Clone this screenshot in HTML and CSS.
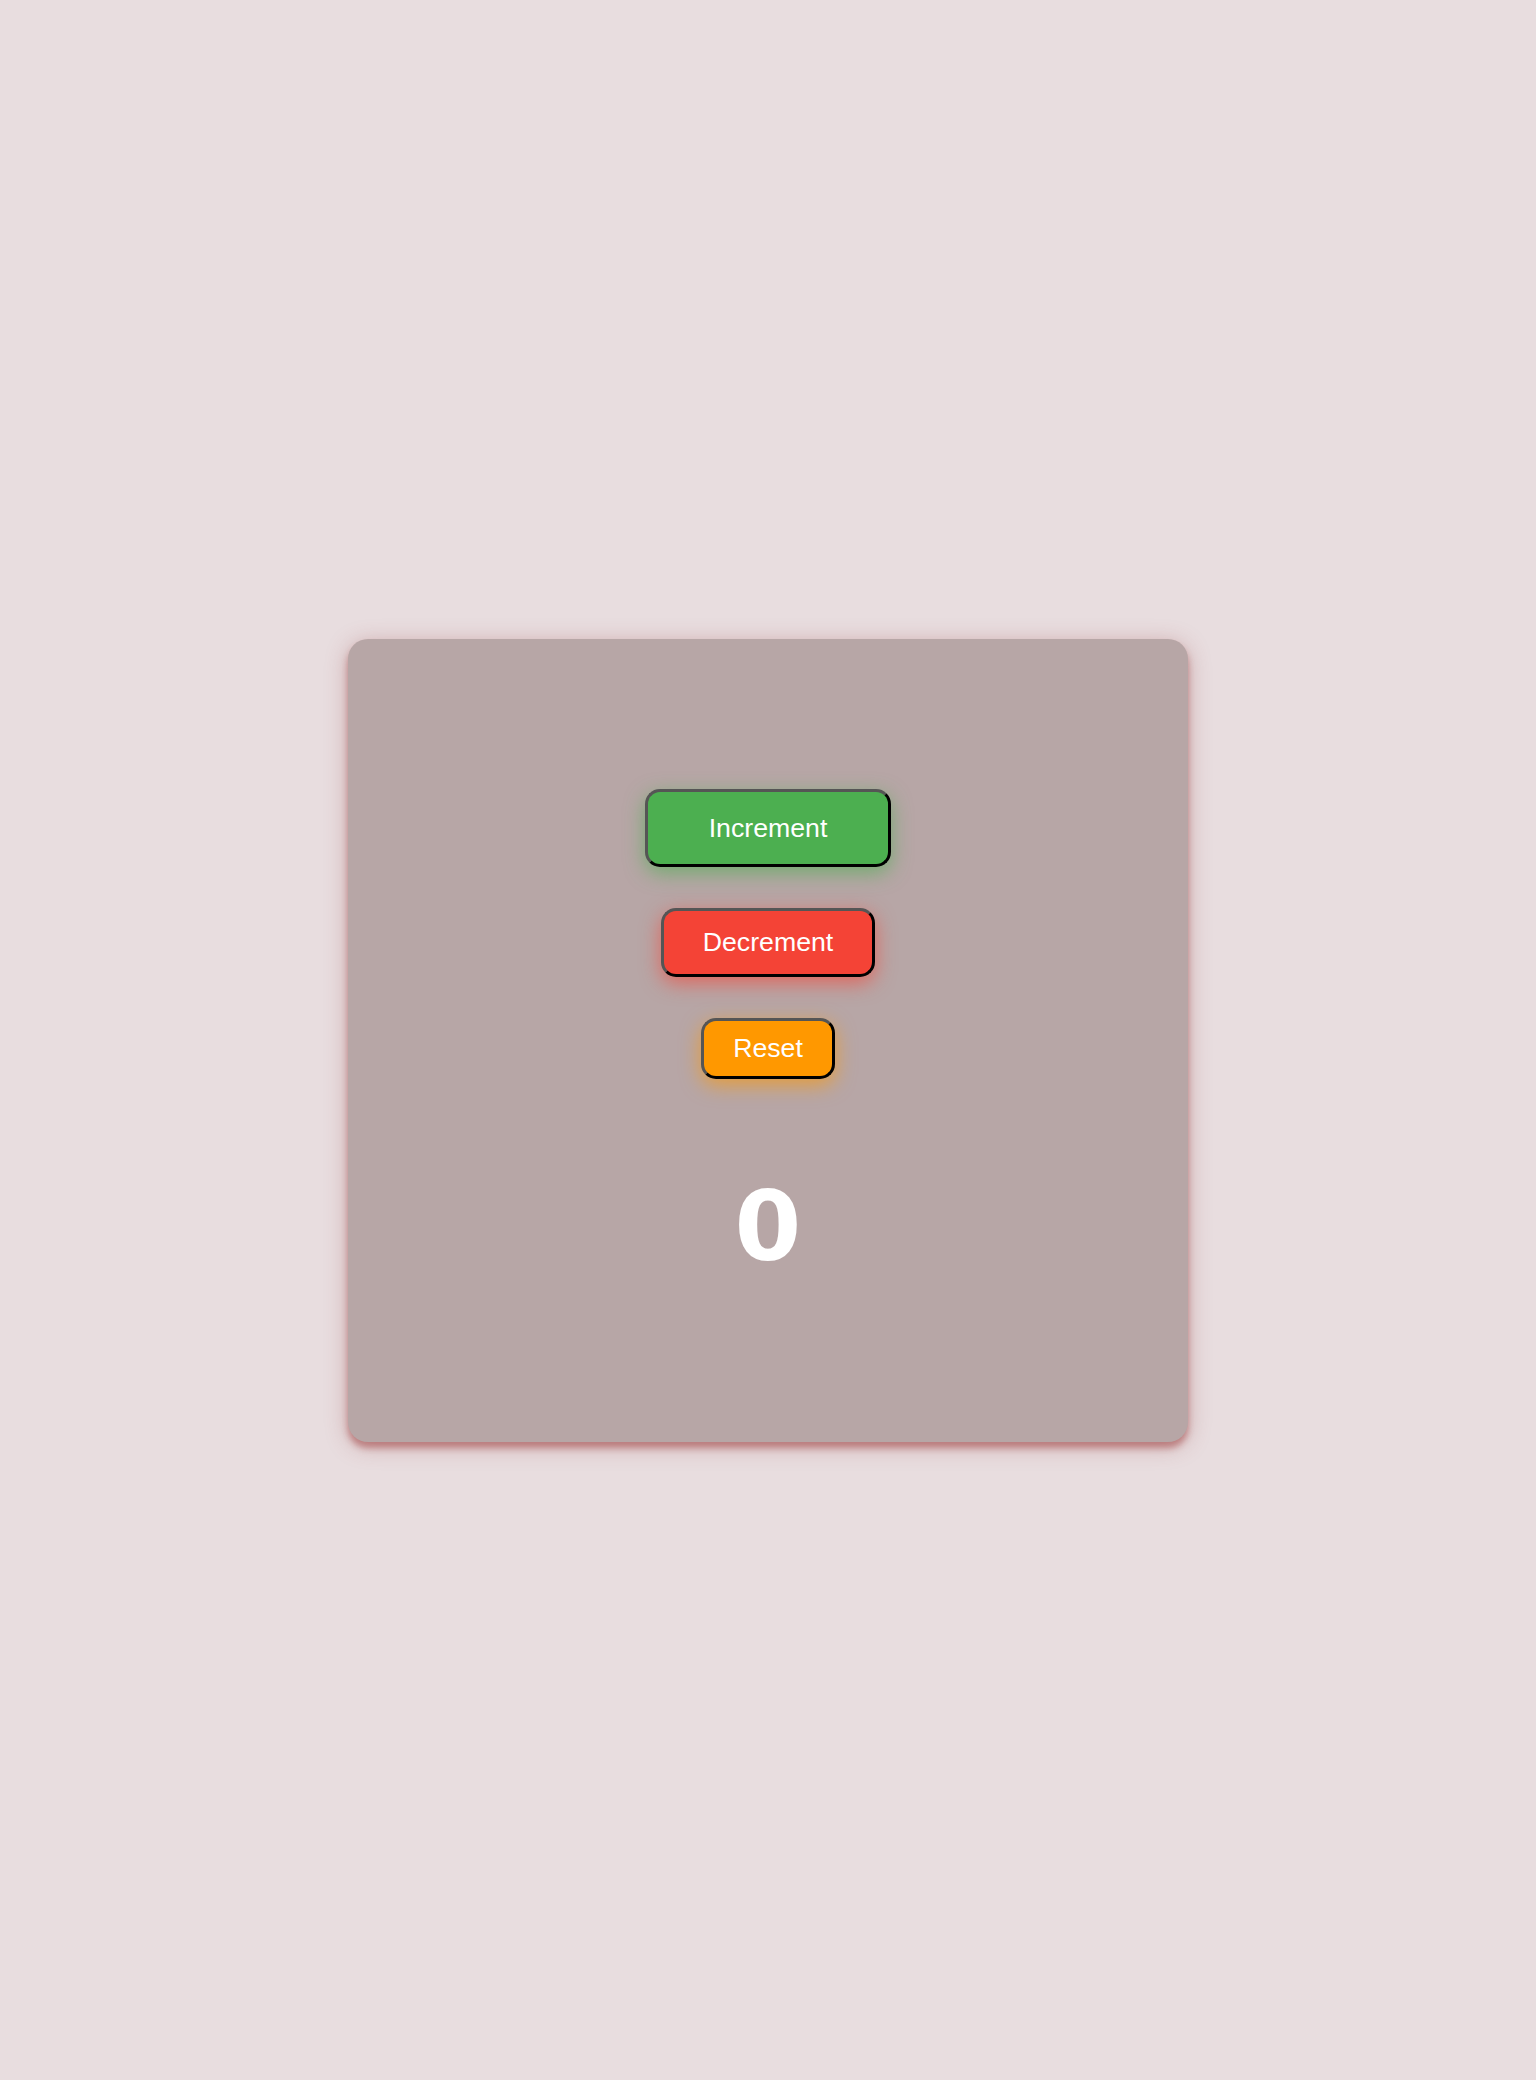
FILE: index.html
```html
<!DOCTYPE html>
<html lang="en">
<head>
<meta charset="utf-8">
<title>Counter</title>
<link rel="stylesheet" href="styles.css">
</head>
<body>
<main class="page">
  <section class="card">
    <button class="btn btn-inc" type="button">Increment</button>
    <button class="btn btn-dec" type="button">Decrement</button>
    <button class="btn btn-reset" type="button">Reset</button>
    <div class="count">0</div>
  </section>
</main>
</body>
</html>
```

FILE: styles.css
```css
html, body {
  margin: 0;
  padding: 0;
}
body {
  background: #e8dddf;
  font-family: "Liberation Sans", Arial, sans-serif;
}
.page {
  min-height: 2080px;
  display: flex;
  align-items: center;
  justify-content: center;
}
.card {
  box-sizing: border-box;
  width: 840px;
  padding: 150px 0 159px;
  background: #b7a6a6;
  border-radius: 20px;
  box-shadow: 0 6px 6px rgba(150, 40, 40, 0.4), 0 4px 22px rgba(150, 60, 60, 0.35);
  display: flex;
  flex-direction: column;
  align-items: center;
}
.btn {
  font-family: "Liberation Sans", Arial, sans-serif;
  font-size: 26.7px;
  line-height: 30px;
  color: #ffffff;
  border: 3px solid;
  border-color: #555555 #000000 #000000 #555555;
  border-radius: 15px;
  margin: 0 0 41px;
  cursor: pointer;
}
.btn-inc {
  background: #4caf50;
  padding: 21px 61px;
  box-shadow: 0 6px 20px rgba(76, 175, 80, 0.65);
}
.btn-dec {
  background: #f44336;
  padding: 16px 39px 17px;
  box-shadow: 0 6px 20px rgba(244, 67, 54, 0.65);
}
.btn-reset {
  background: #ff9800;
  padding: 12px 29px 13px;
  margin-bottom: 92px;
  box-shadow: 0 6px 20px rgba(255, 152, 0, 0.65);
}
.count {
  font-family: "DejaVu Sans", sans-serif;
  font-weight: bold;
  font-size: 96px;
  line-height: 112px;
  color: #ffffff;
}
```
